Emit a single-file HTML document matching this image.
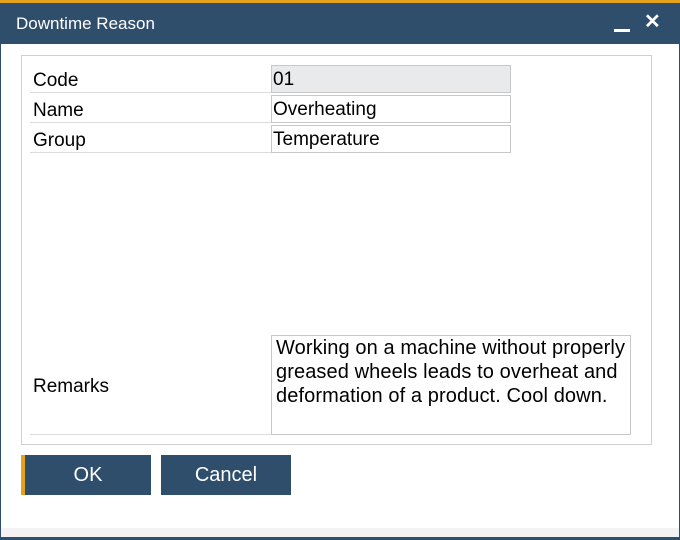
<!DOCTYPE html>
<html><head><style>
*{margin:0;padding:0;box-sizing:border-box}
body{width:680px;height:540px;background:#fff;font-family:"Liberation Sans",sans-serif;position:relative;overflow:hidden}
.abs{position:absolute}
.lbl{position:absolute;left:33px;font-size:19px;color:#000}
.fld{position:absolute;left:271px;width:240px;height:28px;border:1px solid #c8c8c8;background:#fff;font-size:19px;padding:3px 0 0 1px}
.sep{position:absolute;left:30px;width:241px;height:1px;background:#dcdcdc}
.btn{position:absolute;top:455px;height:40px;background:#2e4e6c;color:#fff;font-size:20px;text-align:center;line-height:40px}
</style></head><body>
<div class="abs" style="left:0;top:0;width:680px;height:540px;border-left:1px solid #2e4e6c;border-right:1px solid #2e4e6c;border-bottom:3px solid #2e4e6c"></div>
<div class="abs" style="left:0;top:0;width:680px;height:3px;background:#e4a11b"></div>
<div class="abs" style="left:0;top:3px;width:680px;height:41px;background:#2e4e6c"></div>
<div class="abs" style="left:16px;top:14px;color:#fff;font-size:17px">Downtime Reason</div>
<div class="abs" style="left:614px;top:29px;width:16px;height:3px;background:#fff"></div>
<div class="abs" style="left:644px;top:9px;color:#fff;font-size:20px;font-weight:bold">✕</div>
<div class="abs" style="left:1px;top:528px;width:678px;height:9px;background:#f3f3f3"></div>
<div class="abs" style="left:21px;top:55px;width:631px;height:390px;border:1px solid #d0d0d0"></div>
<div class="lbl" style="top:70px">Code</div>
<div class="lbl" style="top:100px">Name</div>
<div class="lbl" style="top:130px">Group</div>
<div class="lbl" style="top:376px">Remarks</div>
<div class="sep" style="top:92px"></div>
<div class="sep" style="top:122px"></div>
<div class="sep" style="top:152px"></div>
<div class="sep" style="top:434px"></div>
<div class="fld" style="top:65px;background:#e8eaec">01</div>
<div class="fld" style="top:95px">Overheating</div>
<div class="fld" style="top:125px">Temperature</div>
<div class="fld" style="top:335px;width:360px;height:100px;line-height:24px;padding:0 0 0 4px;font-size:20px;letter-spacing:0.1px">Working on a machine without properly greased wheels leads to overheat and deformation of a product. Cool down.</div>
<div class="btn" style="left:21px;width:130px;border-left:4px solid #e4a11b">OK</div>
<div class="btn" style="left:161px;width:130px">Cancel</div>
</body></html>
